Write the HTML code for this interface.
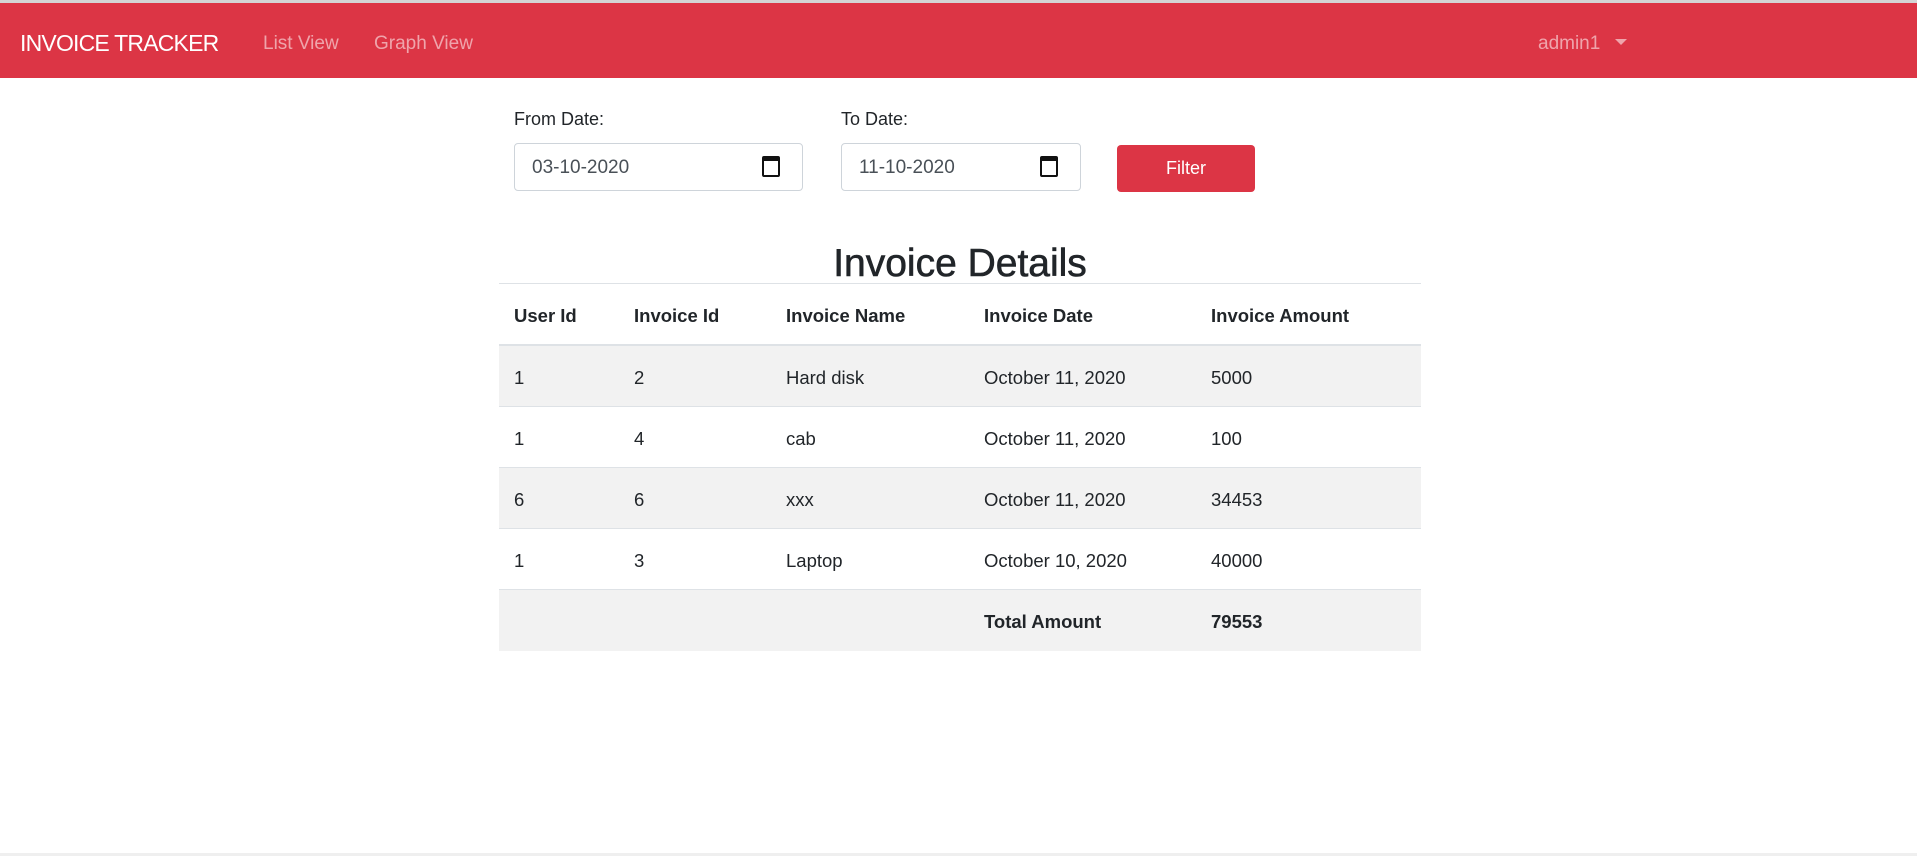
<!DOCTYPE html>
<html><head><meta charset="utf-8"><style>
*{box-sizing:border-box;margin:0;padding:0}
body{width:1917px;height:856px;background:#fff;font-family:"Liberation Sans",sans-serif;color:#212529;position:relative;overflow:hidden}
.top{position:absolute;left:0;top:0;width:1917px;height:3px;background:#d4d4d4}
.nav{position:absolute;left:0;top:3px;width:1917px;height:75px;background:#dc3545}
.nav span{position:absolute;top:30px;font-size:19px;color:rgba(255,255,255,.55)}
.brand{left:20px;top:27px!important;font-size:23px!important;color:#fff!important;letter-spacing:-0.8px}
.caret{position:absolute;left:1615px;top:36px;border-left:6px solid transparent;border-right:6px solid transparent;border-top:6px solid rgba(255,255,255,.55)}
.lbl{position:absolute;top:109px;font-size:18px}
.inp{position:absolute;top:143px;height:48px;border:1px solid #ced4da;border-radius:4px;font-size:19px;color:#495057;padding:13px 17px}
.cal{position:absolute;top:12px;right:22px;width:18px;height:21px;border:2px solid #111;border-top-width:5px;border-radius:2px}
.btn{position:absolute;left:1117px;top:145px;width:138px;height:47px;background:#dc3545;border-radius:4px;color:#fff;font-size:18px;text-align:center;line-height:47px}
h2{position:absolute;left:499px;width:922px;top:242px;text-align:center;font-size:39px;font-weight:normal;color:#212529;-webkit-text-stroke:0.6px #212529}
.hl{position:absolute;left:499px;width:922px;top:283px;height:1px;background:#dee2e6}
.row{position:absolute;left:499px;width:922px;height:61px;border-bottom:1px solid #dee2e6;font-size:18.5px}
.row span{position:absolute;top:21px}
.g{background:#f2f2f2}
.b{font-weight:bold}
.bot{position:absolute;left:0;top:853px;width:1917px;height:3px;background:#efefef}
</style></head><body>
<div class="top"></div>
<div class="nav"><span class="brand">INVOICE TRACKER</span><span style="left:263px">List View</span><span style="left:374px">Graph View</span><span style="left:1538px">admin1</span><div class="caret"></div></div>
<div class="lbl" style="left:514px">From Date:</div>
<div class="lbl" style="left:841px">To Date:</div>
<div class="inp" style="left:514px;width:289px">03-10-2020<div class="cal"></div></div>
<div class="inp" style="left:841px;width:240px">11-10-2020<div class="cal"></div></div>
<div class="btn">Filter</div>
<h2>Invoice Details</h2>
<div class="hl"></div>
<div class="row b" style="top:284px;height:62px;border-bottom:2px solid #dee2e6"><span style="left:15px">User Id</span><span style="left:135px">Invoice Id</span><span style="left:287px">Invoice Name</span><span style="left:485px">Invoice Date</span><span style="left:712px">Invoice Amount</span></div>
<div class="row g" style="top:346px"><span style="left:15px">1</span><span style="left:135px">2</span><span style="left:287px">Hard disk</span><span style="left:485px">October 11, 2020</span><span style="left:712px">5000</span></div>
<div class="row" style="top:407px"><span style="left:15px">1</span><span style="left:135px">4</span><span style="left:287px">cab</span><span style="left:485px">October 11, 2020</span><span style="left:712px">100</span></div>
<div class="row g" style="top:468px"><span style="left:15px">6</span><span style="left:135px">6</span><span style="left:287px">xxx</span><span style="left:485px">October 11, 2020</span><span style="left:712px">34453</span></div>
<div class="row" style="top:529px"><span style="left:15px">1</span><span style="left:135px">3</span><span style="left:287px">Laptop</span><span style="left:485px">October 10, 2020</span><span style="left:712px">40000</span></div>
<div class="row g b" style="top:590px;border-bottom:none"><span style="left:485px">Total Amount</span><span style="left:712px">79553</span></div>
<div class="bot"></div>
</body></html>
